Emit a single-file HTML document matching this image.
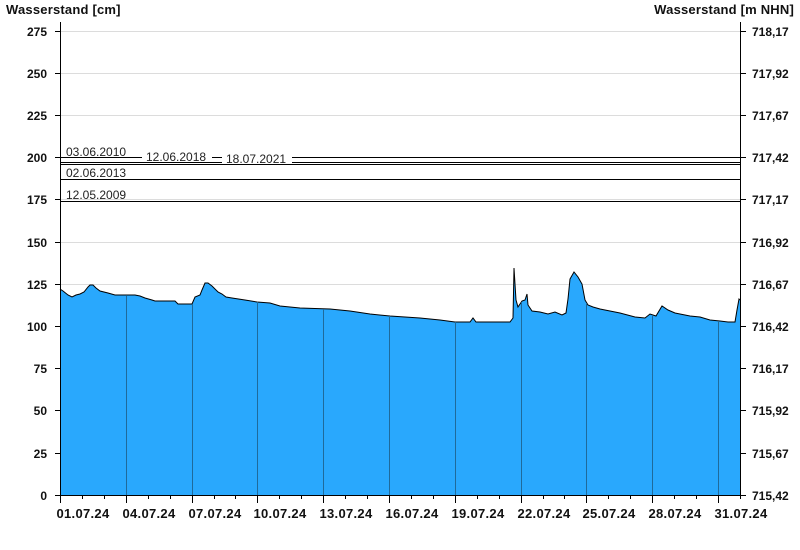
<!DOCTYPE html>
<html><head><meta charset="utf-8"><style>
html,body{margin:0;padding:0;background:#fff;}
svg{display:block;font-family:"Liberation Sans",Arial,sans-serif;}
.b{font-weight:bold;font-size:12px;fill:#111;}
.t{font-weight:bold;font-size:13px;fill:#111;letter-spacing:0.2px;}
.d{font-weight:bold;font-size:13px;fill:#111;letter-spacing:0.3px;}
.s{font-size:12px;fill:#222;}
</style></head><body>
<svg width="800" height="550" viewBox="0 0 800 550">
<text x="6" y="14" class="t">Wasserstand [cm]</text>
<text x="794" y="14" class="t" text-anchor="end">Wasserstand [m NHN]</text>
<g stroke="#dcdcdc" stroke-width="1">
<line x1="60" y1="31.5" x2="740" y2="31.5"/><line x1="60" y1="73.5" x2="740" y2="73.5"/><line x1="60" y1="115.5" x2="740" y2="115.5"/><line x1="60" y1="157.5" x2="740" y2="157.5"/><line x1="60" y1="199.5" x2="740" y2="199.5"/><line x1="60" y1="242.5" x2="740" y2="242.5"/><line x1="60" y1="284.5" x2="740" y2="284.5"/><line x1="60" y1="326.5" x2="740" y2="326.5"/>
</g>
<polygon fill="#29a8fd" points="60,495 60,289 63,291 68,295 72,297 76,295 80,294 84,292 88,287 90,285 93,285 96,288 100,291 108,293 115,295 135,295 140,296 145,298 152,300 155,301 175,301 178,304 192,304 195,297 200,295 202,290 205,283 208,283 212,286 218,292 222,294 226,297 232,298 245,300 257,302 270,303 280,306 300,308 330,309 350,311 370,314 390,316 420,318 440,320 455,322 470,322 473,318 476,322 495,322 510,322 513,318 514,268 516,300 518,307 522,301 525,300 527,294 528,305 532,311 540,312 548,314 555,312 562,315 566,313 568,299 570,279 574,272 578,277 582,284 585,300 588,305 593,307 600,309 620,313 635,317 645,318 650,314 656,316 662,306 668,310 675,313 690,316 700,317 710,320 720,321 728,322 735,322 737,310 739,299 740,300 740,495"/>
<polyline fill="none" stroke="#000" stroke-width="1" points="60,289 63,291 68,295 72,297 76,295 80,294 84,292 88,287 90,285 93,285 96,288 100,291 108,293 115,295 135,295 140,296 145,298 152,300 155,301 175,301 178,304 192,304 195,297 200,295 202,290 205,283 208,283 212,286 218,292 222,294 226,297 232,298 245,300 257,302 270,303 280,306 300,308 330,309 350,311 370,314 390,316 420,318 440,320 455,322 470,322 473,318 476,322 495,322 510,322 513,318 514,268 516,300 518,307 522,301 525,300 527,294 528,305 532,311 540,312 548,314 555,312 562,315 566,313 568,299 570,279 574,272 578,277 582,284 585,300 588,305 593,307 600,309 620,313 635,317 645,318 650,314 656,316 662,306 668,310 675,313 690,316 700,317 710,320 720,321 728,322 735,322 737,310 739,299 740,300"/>
<g stroke="#1f6a9a" stroke-width="1">
<line x1="126.5" y1="296" x2="126.5" y2="495"/><line x1="192.5" y1="304" x2="192.5" y2="495"/><line x1="257.5" y1="302" x2="257.5" y2="495"/><line x1="323.5" y1="309" x2="323.5" y2="495"/><line x1="389.5" y1="316" x2="389.5" y2="495"/><line x1="455.5" y1="322" x2="455.5" y2="495"/><line x1="521.5" y1="302" x2="521.5" y2="495"/><line x1="586.5" y1="303" x2="586.5" y2="495"/><line x1="652.5" y1="315" x2="652.5" y2="495"/><line x1="718.5" y1="321" x2="718.5" y2="495"/>
</g>
<g stroke="#000" stroke-width="1">
<line x1="60" y1="157.5" x2="740" y2="157.5"/>
<line x1="60" y1="162.5" x2="740" y2="162.5"/>
<line x1="60" y1="164.5" x2="740" y2="164.5"/>
<line x1="60" y1="179.5" x2="740" y2="179.5"/>
<line x1="60" y1="201.5" x2="740" y2="201.5"/>
</g>
<rect x="142" y="150" width="70" height="12" fill="#fff"/>
<rect x="222" y="152" width="70" height="12" fill="#fff"/>
<text x="66" y="156" class="s">03.06.2010</text>
<text x="146" y="161" class="s">12.06.2018</text>
<text x="226" y="163" class="s">18.07.2021</text>
<text x="66" y="177" class="s">02.06.2013</text>
<text x="66" y="199" class="s">12.05.2009</text>
<g stroke="#000" stroke-width="1">
<line x1="60.5" y1="22" x2="60.5" y2="495"/><line x1="740.5" y1="22" x2="740.5" y2="495"/>
<line x1="55" y1="495.5" x2="740" y2="495.5"/>
</g>
<g stroke="#000" stroke-width="1">
<line x1="55" y1="31.5" x2="60" y2="31.5"/><line x1="55" y1="73.5" x2="60" y2="73.5"/><line x1="55" y1="115.5" x2="60" y2="115.5"/><line x1="55" y1="157.5" x2="60" y2="157.5"/><line x1="55" y1="199.5" x2="60" y2="199.5"/><line x1="55" y1="242.5" x2="60" y2="242.5"/><line x1="55" y1="284.5" x2="60" y2="284.5"/><line x1="55" y1="326.5" x2="60" y2="326.5"/><line x1="55" y1="368.5" x2="60" y2="368.5"/><line x1="55" y1="410.5" x2="60" y2="410.5"/><line x1="55" y1="453.5" x2="60" y2="453.5"/>
<line x1="740" y1="31.5" x2="746" y2="31.5"/><line x1="740" y1="73.5" x2="746" y2="73.5"/><line x1="740" y1="115.5" x2="746" y2="115.5"/><line x1="740" y1="157.5" x2="746" y2="157.5"/><line x1="740" y1="199.5" x2="746" y2="199.5"/><line x1="740" y1="242.5" x2="746" y2="242.5"/><line x1="740" y1="284.5" x2="746" y2="284.5"/><line x1="740" y1="326.5" x2="746" y2="326.5"/><line x1="740" y1="368.5" x2="746" y2="368.5"/><line x1="740" y1="410.5" x2="746" y2="410.5"/><line x1="740" y1="453.5" x2="746" y2="453.5"/><line x1="740" y1="495.5" x2="746" y2="495.5"/>
</g>
<g stroke="#000" stroke-width="1">
<line x1="60.5" y1="495" x2="60.5" y2="503"/><line x1="126.5" y1="495" x2="126.5" y2="503"/><line x1="192.5" y1="495" x2="192.5" y2="503"/><line x1="257.5" y1="495" x2="257.5" y2="503"/><line x1="323.5" y1="495" x2="323.5" y2="503"/><line x1="389.5" y1="495" x2="389.5" y2="503"/><line x1="455.5" y1="495" x2="455.5" y2="503"/><line x1="521.5" y1="495" x2="521.5" y2="503"/><line x1="586.5" y1="495" x2="586.5" y2="503"/><line x1="652.5" y1="495" x2="652.5" y2="503"/><line x1="718.5" y1="495" x2="718.5" y2="503"/>
<line x1="82.5" y1="495" x2="82.5" y2="499"/><line x1="104.5" y1="495" x2="104.5" y2="499"/><line x1="148.5" y1="495" x2="148.5" y2="499"/><line x1="170.5" y1="495" x2="170.5" y2="499"/><line x1="214.5" y1="495" x2="214.5" y2="499"/><line x1="235.5" y1="495" x2="235.5" y2="499"/><line x1="279.5" y1="495" x2="279.5" y2="499"/><line x1="301.5" y1="495" x2="301.5" y2="499"/><line x1="345.5" y1="495" x2="345.5" y2="499"/><line x1="367.5" y1="495" x2="367.5" y2="499"/><line x1="411.5" y1="495" x2="411.5" y2="499"/><line x1="433.5" y1="495" x2="433.5" y2="499"/><line x1="477.5" y1="495" x2="477.5" y2="499"/><line x1="499.5" y1="495" x2="499.5" y2="499"/><line x1="543.5" y1="495" x2="543.5" y2="499"/><line x1="564.5" y1="495" x2="564.5" y2="499"/><line x1="608.5" y1="495" x2="608.5" y2="499"/><line x1="630.5" y1="495" x2="630.5" y2="499"/><line x1="674.5" y1="495" x2="674.5" y2="499"/><line x1="696.5" y1="495" x2="696.5" y2="499"/><line x1="740.5" y1="495" x2="740.5" y2="499"/>
</g>
<g text-anchor="end">
<text x="47" y="36" class="b">275</text><text x="47" y="78" class="b">250</text><text x="47" y="120" class="b">225</text><text x="47" y="162" class="b">200</text><text x="47" y="204" class="b">175</text><text x="47" y="247" class="b">150</text><text x="47" y="289" class="b">125</text><text x="47" y="331" class="b">100</text><text x="47" y="373" class="b">75</text><text x="47" y="415" class="b">50</text><text x="47" y="458" class="b">25</text><text x="47" y="500" class="b">0</text>
</g>
<g>
<text x="752" y="36" class="b">718,17</text><text x="752" y="78" class="b">717,92</text><text x="752" y="120" class="b">717,67</text><text x="752" y="162" class="b">717,42</text><text x="752" y="204" class="b">717,17</text><text x="752" y="247" class="b">716,92</text><text x="752" y="289" class="b">716,67</text><text x="752" y="331" class="b">716,42</text><text x="752" y="373" class="b">716,17</text><text x="752" y="415" class="b">715,92</text><text x="752" y="458" class="b">715,67</text><text x="752" y="500" class="b">715,42</text>
</g>
<g text-anchor="middle">
<text x="83" y="518" class="d">01.07.24</text><text x="149" y="518" class="d">04.07.24</text><text x="215" y="518" class="d">07.07.24</text><text x="280" y="518" class="d">10.07.24</text><text x="346" y="518" class="d">13.07.24</text><text x="412" y="518" class="d">16.07.24</text><text x="478" y="518" class="d">19.07.24</text><text x="544" y="518" class="d">22.07.24</text><text x="609" y="518" class="d">25.07.24</text><text x="675" y="518" class="d">28.07.24</text><text x="741" y="518" class="d">31.07.24</text>
</g>
</svg>
</body></html>
